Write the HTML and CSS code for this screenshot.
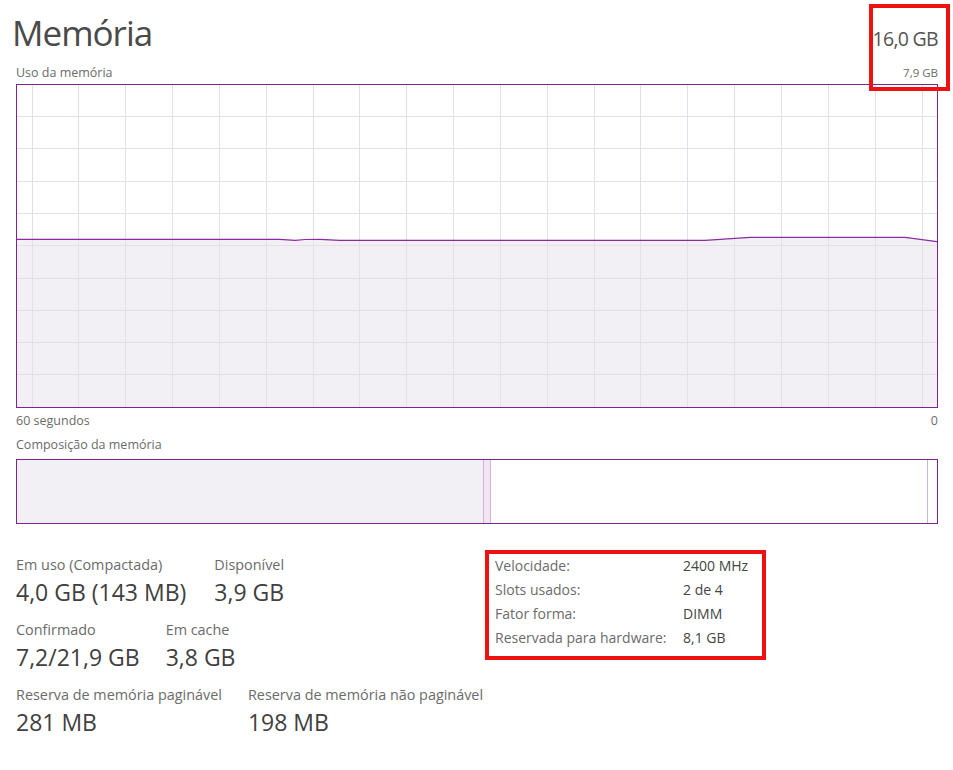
FILE: index.html
```html
<!DOCTYPE html>
<html lang="pt">
<head>
<meta charset="utf-8">
<title>Memória</title>
<link rel="stylesheet" href="styles.css">
</head>
<body>
<div class="page">
  <div class="header">
    <h1 class="title">Memória</h1>
    <div class="total">16,0 GB</div>
  </div>
  <div class="subhead">
    <span>Uso da memória</span>
    <span class="small-right">7,9 GB</span>
  </div>
  <div class="graph">
    <svg class="graph-svg" viewBox="0 0 922 324" width="922" height="324">
      <polygon class="fill" points="0,155.3 264,155.3 279,156.3 289,155.5 304,155.3 324,156.3 689,156.3 734,153.3 889,153.3 921,157.7 921,324 0,324"/>
      <g class="grid">
        <line x1="16.5" y1="0" x2="16.5" y2="324"/>
        <line x1="62.5" y1="0" x2="62.5" y2="324"/>
        <line x1="109.5" y1="0" x2="109.5" y2="324"/>
        <line x1="156.5" y1="0" x2="156.5" y2="324"/>
        <line x1="203.5" y1="0" x2="203.5" y2="324"/>
        <line x1="250.5" y1="0" x2="250.5" y2="324"/>
        <line x1="297.5" y1="0" x2="297.5" y2="324"/>
        <line x1="343.5" y1="0" x2="343.5" y2="324"/>
        <line x1="390.5" y1="0" x2="390.5" y2="324"/>
        <line x1="437.5" y1="0" x2="437.5" y2="324"/>
        <line x1="484.5" y1="0" x2="484.5" y2="324"/>
        <line x1="531.5" y1="0" x2="531.5" y2="324"/>
        <line x1="578.5" y1="0" x2="578.5" y2="324"/>
        <line x1="624.5" y1="0" x2="624.5" y2="324"/>
        <line x1="671.5" y1="0" x2="671.5" y2="324"/>
        <line x1="718.5" y1="0" x2="718.5" y2="324"/>
        <line x1="765.5" y1="0" x2="765.5" y2="324"/>
        <line x1="812.5" y1="0" x2="812.5" y2="324"/>
        <line x1="859.5" y1="0" x2="859.5" y2="324"/>
        <line x1="906.5" y1="0" x2="906.5" y2="324"/>
        <line x1="0" y1="32.5" x2="922" y2="32.5"/>
        <line x1="0" y1="64.5" x2="922" y2="64.5"/>
        <line x1="0" y1="97.5" x2="922" y2="97.5"/>
        <line x1="0" y1="129.5" x2="922" y2="129.5"/>
        <line x1="0" y1="161.5" x2="922" y2="161.5"/>
        <line x1="0" y1="194.5" x2="922" y2="194.5"/>
        <line x1="0" y1="226.5" x2="922" y2="226.5"/>
        <line x1="0" y1="258.5" x2="922" y2="258.5"/>
        <line x1="0" y1="290.5" x2="922" y2="290.5"/>
      </g>
      <polyline class="usage" points="0,155.3 264,155.3 279,156.3 289,155.5 304,155.3 324,156.3 689,156.3 734,153.3 889,153.3 921,157.7"/>
      <rect class="frame" x="0.5" y="0.5" width="921" height="323"/>
    </svg>
  </div>
  <div class="axis">
    <span>60 segundos</span>
    <span>0</span>
  </div>
  <div class="section-label">Composição da memória</div>
  <div class="composition">
    <div class="seg seg-inuse"></div>
    <div class="seg seg-modified"></div>
    <div class="seg seg-standby"></div>
    <div class="seg seg-free"></div>
  </div>
  <div class="details">
    <div class="stats">
      <div class="stat-row">
        <div class="stat"><div class="stat-label">Em uso (Compactada)</div><div class="stat-value">4,0 GB (143 MB)</div></div>
        <div class="stat"><div class="stat-label">Disponível</div><div class="stat-value">3,9 GB</div></div>
      </div>
      <div class="stat-row">
        <div class="stat"><div class="stat-label">Confirmado</div><div class="stat-value">7,2/21,9 GB</div></div>
        <div class="stat"><div class="stat-label">Em cache</div><div class="stat-value">3,8 GB</div></div>
      </div>
      <div class="stat-row">
        <div class="stat"><div class="stat-label">Reserva de memória paginável</div><div class="stat-value">281 MB</div></div>
        <div class="stat"><div class="stat-label">Reserva de memória não paginável</div><div class="stat-value">198 MB</div></div>
      </div>
    </div>
    <dl class="props">
      <dt>Velocidade:</dt><dd>2400 MHz</dd>
      <dt>Slots usados:</dt><dd>2 de 4</dd>
      <dt>Fator forma:</dt><dd>DIMM</dd>
      <dt>Reservada para hardware:</dt><dd>8,1 GB</dd>
    </dl>
  </div>
  <div class="highlight highlight-total"></div>
  <div class="highlight highlight-props"></div>
</div>
</body>
</html>
```

FILE: styles.css
```css
* { box-sizing: border-box; }

html, body {
  margin: 0;
  padding: 0;
  background: #ffffff;
}

body {
  font-family: "Open Sans", "Noto Sans", "DejaVu Sans", sans-serif;
  color: #444;
}

.page {
  position: relative;
  width: 953px;
  height: 770px;
  padding: 11px 15px 0 16px;
}

.header {
  display: flex;
  justify-content: space-between;
  align-items: baseline;
  width: 922px;
}

.title {
  margin: 0 0 0 -4px;
  font-size: 35px;
  line-height: 44px;
  font-weight: 400;
  letter-spacing: -1px;
  color: #4a4a4a;
}

.total {
  font-size: 19.5px;
  letter-spacing: -0.7px;
  color: #555555;
}

.subhead {
  display: flex;
  justify-content: space-between;
  width: 922px;
  margin-top: 10px;
  font-size: 12.5px;
  line-height: 16px;
  color: #6b6b6b;
}

.small-right {
  font-size: 11.5px;
}

.graph {
  margin-top: 3px;
  width: 922px;
  height: 324px;
}

.graph-svg {
  display: block;
}

.fill { fill: #f3f0f5; }
.grid line { stroke: #e6deea; stroke-width: 1; }
.usage { fill: none; stroke: #8b2ba0; stroke-width: 1.2; }
.frame { fill: none; stroke: #7d2491; stroke-width: 1; }

.axis {
  display: flex;
  justify-content: space-between;
  width: 922px;
  margin-top: 5px;
  font-size: 12.5px;
  line-height: 16px;
  color: #6b6b6b;
}

.section-label {
  margin-top: 8px;
  font-size: 12.5px;
  line-height: 16px;
  color: #6b6b6b;
}

.composition {
  display: flex;
  margin-top: 6px;
  width: 922px;
  height: 65px;
  border: 1px solid #7d2491;
}

.seg { height: 100%; }
.seg-inuse { width: 466px; background: #f3f0f5; }
.seg-modified {
  width: 8px;
  background: #f1e6f4;
  border-left: 1px solid #d3b3de;
  border-right: 1px solid #d3b3de;
}
.seg-standby { width: 436px; background: #ffffff; }
.seg-free {
  width: 10px;
  background: #ffffff;
  border-left: 1px solid #c6b8cd;
}

.details {
  display: flex;
  align-items: flex-start;
  margin-top: 32px;
}

.stats {
  width: 479px;
  display: flex;
  flex-direction: column;
  gap: 15px;
}

.stat-row {
  display: flex;
  gap: 28px;
}

.stat-row + .stat-row {
  gap: 26px;
}

.stat-label {
  font-size: 14.4px;
  line-height: 18px;
  color: #6b6b6b;
  white-space: nowrap;
}

.stat-value {
  margin-top: 4px;
  font-size: 23px;
  line-height: 28px;
  color: #404040;
  white-space: nowrap;
}

.props {
  display: grid;
  grid-template-columns: 188px auto;
  margin: -2px 0 0 0;
  font-size: 14px;
  line-height: 24px;
}

.props dt {
  color: #6b6b6b;
}

.props dd {
  margin: 0;
  color: #444;
}

.highlight {
  position: absolute;
  border: 4px solid #ee1111;
  pointer-events: none;
}

.highlight-total {
  left: 869px;
  top: 4px;
  width: 81px;
  height: 87px;
}

.highlight-props {
  left: 485px;
  top: 550px;
  width: 281px;
  height: 110px;
}
```
